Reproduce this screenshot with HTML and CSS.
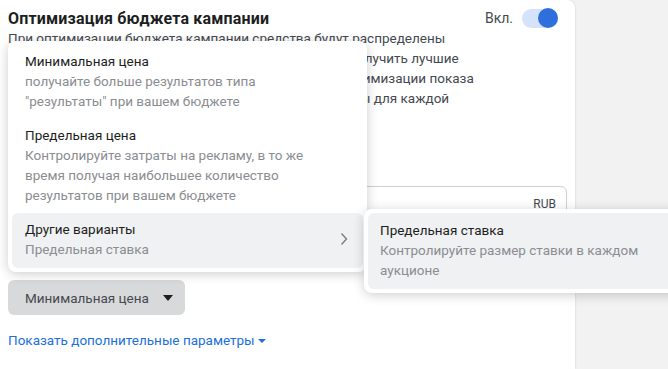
FILE: index.html
```html
<!DOCTYPE html>
<html lang="ru">
<head>
  <meta charset="UTF-8">
  <title>Оптимизация бюджета кампании</title>
  <link rel="stylesheet" href="styles.css">
</head>
<body>
  <div class="page">
    <div class="card">
      <div class="head">
        <h2>Оптимизация бюджета кампании</h2>
        <div class="switch">
          Вкл.
          <span class="toggle"><span class="knob"></span></span>
        </div>
      </div>
      <p class="info">
        При оптимизации бюджета кампании средства будут распределены<br>
        между всеми группами объявлений, чтобы вы могли получить лучшие<br>
        результаты. Установите стратегию ставок или цель оптимизации показа<br>
        объявлений. Вы можете задать свои лимиты на затраты для каждой<br>
        группы объявлений.
      </p>

      <div class="label">Бюджет кампании</div>
      <div class="field">
        <span class="amount">100,00 ₽</span>
        <span class="cur">RUB</span>
      </div>

      <div class="label">Стратегия ставок кампании</div>

      <div class="select-wrap">
        <button class="select">Минимальная цена <span class="caret"></span></button>

        <div class="menu">
          <div class="item">
            <div class="item-title">Минимальная цена</div>
            <div class="item-desc">получайте больше результатов типа<br>"результаты" при вашем бюджете</div>
          </div>
          <div class="item">
            <div class="item-title">Предельная цена</div>
            <div class="item-desc">Контролируйте затраты на рекламу, в то же<br>время получая наибольшее количество<br>результатов при вашем бюджете</div>
          </div>
          <div class="item item-more active">
            <div>
              <div class="item-title">Другие варианты</div>
              <div class="item-desc">Предельная ставка</div>
            </div>
            <svg class="chevron" width="8" height="14" viewBox="0 0 8 14">
              <path d="M1.5 1.5 L6.5 7 L1.5 12.5" fill="none" stroke="#7a7d82" stroke-width="1.4"/>
            </svg>
          </div>
        </div>

        <div class="submenu">
          <div class="item active">
            <div class="item-title">Предельная ставка</div>
            <div class="item-desc">Контролируйте размер ставки в каждом<br>аукционе</div>
          </div>
        </div>
      </div>

      <a class="more" href="#">Показать дополнительные параметры <span class="small-caret"></span></a>
    </div>
    <div class="side"></div>
  </div>
</body>
</html>
```

FILE: styles.css
```css
html, body {
  margin: 0;
  padding: 0;
}
body {
  font-family: Roboto, "Liberation Sans", Arial, sans-serif;
  font-size: 13.5px;
  color: #444950;
  background-color: #f2f2f2;
  overflow: hidden;
}
.page {
  display: flex;
  width: 668px;
  height: 369px;
  overflow: hidden;
}
.card {
  width: 567px;
  flex-shrink: 0;
  background-color: white;
  padding: 0 0 0 8px;
  border-top-right-radius: 8px;
  box-shadow: 1px 0 2px rgba(0, 0, 0, 0.06);
  position: relative;
}
.side {
  flex: 1;
}
.head {
  display: flex;
  justify-content: space-between;
  align-items: center;
  height: 20px;
  padding: 8px 17px 0 0;
}
h2 {
  margin: 0;
  font-size: 16px;
  font-weight: bold;
  letter-spacing: 0.18px;
  color: #1c1e21;
}
.switch {
  display: flex;
  align-items: center;
  gap: 9px;
  font-size: 14px;
  color: #444950;
}
.toggle {
  display: flex;
  justify-content: flex-end;
  align-items: center;
  width: 36px;
  height: 19px;
  border-radius: 10px;
  background-color: #d4e3fa;
}
.knob {
  width: 20px;
  height: 20px;
  border-radius: 50%;
  background-color: #2f6fdc;
}
.info {
  margin: 0;
  line-height: 20px;
  color: #444950;
}
.label {
  margin-top: 30px;
  font-weight: bold;
  color: #1c1e21;
  line-height: 20px;
}
.field {
  display: flex;
  justify-content: space-between;
  align-items: center;
  height: 36px;
  margin: 8px 0 0 0;
  width: 559px;
  padding: 0 10px;
  box-sizing: border-box;
  border: 1px solid #ccd0d5;
  border-radius: 6px;
}
.cur {
  font-size: 12px;
  color: #444950;
}
.select-wrap {
  position: relative;
  margin-top: 8px;
}
.select {
  display: flex;
  align-items: center;
  gap: 14px;
  height: 35px;
  padding: 0 12px 0 17px;
  border: none;
  border-radius: 6px;
  background-color: #d8d9da;
  font-family: inherit;
  font-size: 13.5px;
  color: #444950;
}
.caret {
  width: 0;
  height: 0;
  border-left: 5px solid transparent;
  border-right: 5px solid transparent;
  border-top: 6px solid #1c1e21;
}
.menu {
  position: absolute;
  left: 0;
  bottom: 43px;
  width: 351px;
  padding: 4px;
  background-color: white;
  border-radius: 8px;
  box-shadow: 0 2px 12px rgba(0, 0, 0, 0.2);
}
.submenu {
  position: absolute;
  left: 356px;
  bottom: 22px;
  width: 340px;
  padding: 4px;
  background-color: white;
  border-radius: 8px;
  box-shadow: 0 2px 12px rgba(0, 0, 0, 0.2);
}
.item {
  padding: 6px 13px 8px 13px;
  border-radius: 6px;
  line-height: 20px;
}
.item-more {
  display: flex;
  justify-content: space-between;
  align-items: center;
  padding-bottom: 9px;
}
.submenu .item {
  padding: 7px 12px 9px 12px;
}
.item.active {
  background-color: #f0f1f3;
}
.item-title {
  color: #1c1e21;
}
.item-desc {
  color: #8a8d91;
}
.chevron {
  margin-right: 2px;
}
.more {
  display: inline-block;
  margin-top: 17px;
  color: #216fdb;
  text-decoration: none;
}
.small-caret {
  display: inline-block;
  vertical-align: middle;
  width: 0;
  height: 0;
  border-left: 4px solid transparent;
  border-right: 4px solid transparent;
  border-top: 4px solid #216fdb;
}
```
